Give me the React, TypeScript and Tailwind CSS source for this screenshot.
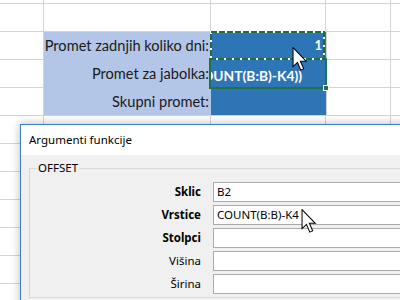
import React from "react";

const rows = [1, 2, 3, 4, 5, 6, 7, 8, 9, 10, 11];

function Cursor({ className }: { className: string }) {
  return (
    <svg className={className} width="16" height="24" viewBox="0 0 12 19" fill="none">
      <path d="M0.5 0.5 L0.5 15.5 L4 12.2 L6.6 18.3 L8.9 17.3 L6.3 11.3 L11 11.3 Z" fill="white" stroke="black" strokeWidth="0.8" strokeLinejoin="miter" />
    </svg>
  );
}

function Sheet() {
  return (
    <div className="relative w-[400px] bg-white font-['Lato',sans-serif]">
      <div className="flex h-[4px] border-b border-[#d4d4d4]">
        <div className="w-[44px] border-r border-[#d4d4d4]" />
        <div className="w-[167px] border-r border-[#d4d4d4]" />
        <div className="w-[115px] border-r border-[#d4d4d4]" />
        <div className="w-[65px] border-r border-[#d4d4d4]" />
        <div className="flex-1" />
      </div>
      {rows.map((r) => {
        const label =
          r === 2 ? "Promet zadnjih koliko dni:" : r === 3 ? "Promet za jabolka:" : r === 4 ? "Skupni promet:" : "";
        const blue = r >= 2 && r <= 4;
        return (
          <div key={r} className="flex h-[28px]">
            <div className="w-[44px] border-r border-b border-[#d4d4d4]" />
            {blue ? (
              <>
                <div
                  className={`w-[167px] bg-[#b4c6e7] flex items-center justify-end pr-[2px] text-[14.6px] text-[#1a1a1a] whitespace-nowrap ${
                    r === 4 ? "border-b border-[#d4d4d4]" : ""
                  }`}
                >
                  {label}
                </div>
                <div
                  className={`w-[115px] bg-[#2e75b6] flex items-center justify-end overflow-hidden whitespace-nowrap text-white font-bold ${
                    r === 4 ? "border-b border-[#d4d4d4]" : ""
                  }`}
                >
                  {r === 2 && <span className="shrink-0 pr-[4px] text-[13px]">1</span>}
                  {r === 3 && <span className="shrink-0 pr-[24px] pt-[5px] text-[13.8px]">=OFFSET(B2;COUNT(B:B)-K4))</span>}
                </div>
                <div className="w-[65px] border-l border-r border-b border-[#d4d4d4]" />
              </>
            ) : (
              <>
                <div className="w-[167px] border-r border-b border-[#d4d4d4]" />
                <div className="w-[115px] border-r border-b border-[#d4d4d4]" />
                <div className="w-[65px] border-r border-b border-[#d4d4d4]" />
              </>
            )}
            <div className="flex-1 border-b border-[#d4d4d4]" />
          </div>
        );
      })}

      {/* active cell */}
      <div className="absolute left-[209px] top-[58px] w-[118px] h-[31px] border-2 border-[#217346]" />
      <div className="absolute left-[323px] top-[85px] w-[6px] h-[6px] bg-[#217346] border border-white" />
      {/* copy marquee */}
      <svg className="absolute left-[208px] top-[29px]" width="120" height="33">
        <rect x="3" y="3" width="113" height="27" fill="none" stroke="white" strokeWidth="2" />
        <rect x="3" y="3" width="113" height="27" fill="none" stroke="#1f6e43" strokeWidth="2" strokeDasharray="6 2" />
      </svg>
      <Cursor className="absolute left-[292px] top-[47px]" />
    </div>
  );
}

const args = [
  { label: "Sklic", bold: true, value: "B2" },
  { label: "Vrstice", bold: true, value: "COUNT(B:B)-K4" },
  { label: "Stolpci", bold: true, value: "" },
  { label: "Višina", bold: false, value: "" },
  { label: "Širina", bold: false, value: "" },
];

function Dialog() {
  return (
    <div className="absolute left-[20px] top-[124px] w-[420px] h-[200px] border border-[#3d7fc6] bg-white shadow-[0_0_9px_rgba(0,0,0,0.28)] font-['Noto_Sans',sans-serif] text-black text-[11.5px]">
      <div className="h-[30px] flex items-center pl-[8px]">Argumenti funkcije</div>
      <div className="bg-[#f0f0f0] h-full pl-[8px] pt-[13px]">
        <div className="relative border border-[#d9d9d9] pt-[13px] h-[130px]">
          <span className="absolute -top-[9px] left-[7px] px-[1px] bg-[#f0f0f0] leading-[16px]">OFFSET</span>
          <div className="flex flex-col gap-[3px]">
            {args.map((a) => (
              <div key={a.label} className="flex items-center h-[20px]">
                <div className={`w-[171px] text-right ${a.bold ? "font-bold" : ""}`}>{a.label}</div>
                <div className="ml-[12px] flex-1 h-[20px] bg-white border border-[#ababab] flex items-center pl-[3px]">
                  {a.value}
                </div>
              </div>
            ))}
          </div>
        </div>
      </div>
      <Cursor className="absolute left-[280px] top-[84px]" />
    </div>
  );
}

export default function App() {
  return (
    <div className="relative w-[400px] h-[300px] overflow-hidden bg-white">
      <Sheet />
      <Dialog />
    </div>
  );
}
